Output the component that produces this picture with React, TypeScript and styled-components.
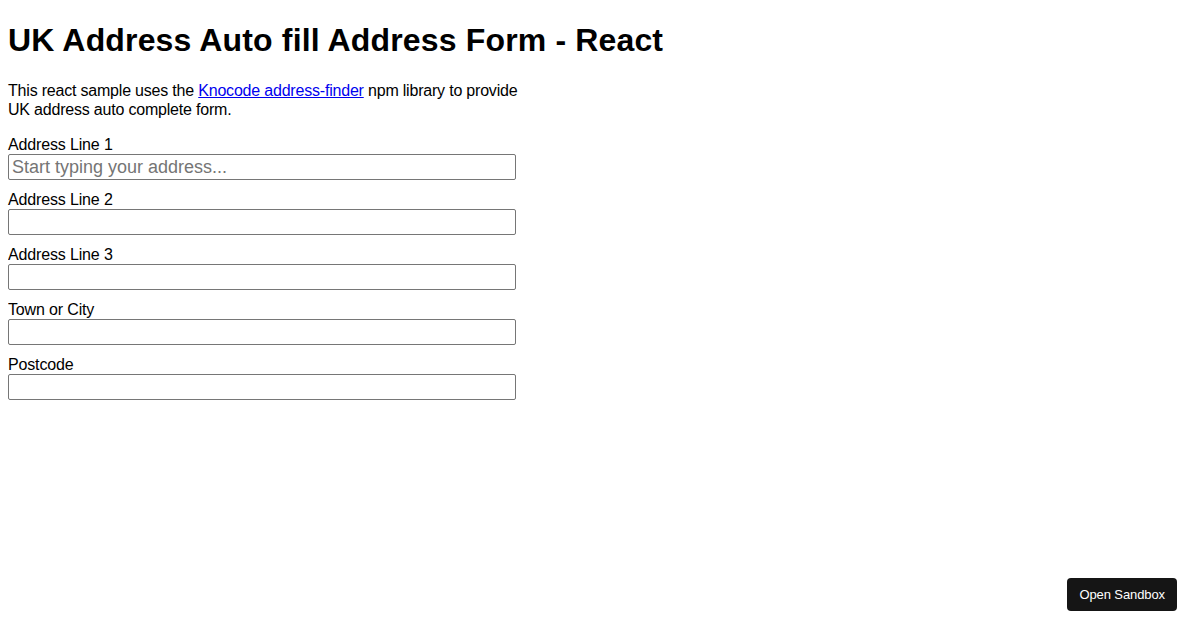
import styled, {createGlobalStyle} from 'styled-components';

const GlobalStyle = createGlobalStyle`
	body {
		margin: 8px;
		font-family: "Liberation Sans", Arial, sans-serif;
		color: #000;
		background: #fff;
	}
`;

const Page = styled.main`
	display: flex;
	flex-direction: column;
`;

const Title = styled.h1`
	font-size: 32px;
	font-weight: bold;
	letter-spacing: 0.15px;
	margin: 14px 0 22px;
`;

const Intro = styled.p`
	font-size: 16px;
	line-height: 19px;
	letter-spacing: -0.2px;
	max-width: 520px;
	margin: 0 0 16px;

	a {
		color: #0000ee;
	}
`;

const Form = styled.form`
	display: flex;
	flex-direction: column;
	gap: 10px;
	width: 508px;
`;

const Field = styled.div`
	display: flex;
	flex-direction: column;
`;

const Label = styled.label`
	font-size: 16px;
	line-height: 19px;
	letter-spacing: -0.15px;
`;

const Input = styled.input`
	box-sizing: border-box;
	width: 100%;
	height: 26px;
	font-family: "Liberation Sans", Arial, sans-serif;
	font-size: 18px;
	padding: 1px 3px;
	border: 1px solid #767676;
	border-radius: 2px;

	&::placeholder {
		color: #757575;
	}
`;

const SandboxButton = styled.button`
	position: fixed;
	right: 23px;
	bottom: 19px;
	height: 33px;
	padding: 0 12px;
	background: #151515;
	color: #fff;
	border: none;
	border-radius: 4px;
	font-family: "Liberation Sans", Arial, sans-serif;
	font-size: 13px;
	letter-spacing: -0.1px;
`;

const fields = [
	{id: 'line1', label: 'Address Line 1', placeholder: 'Start typing your address...'},
	{id: 'line2', label: 'Address Line 2'},
	{id: 'line3', label: 'Address Line 3'},
	{id: 'town', label: 'Town or City'},
	{id: 'postcode', label: 'Postcode'},
];

export default function App() {
	return (
		<>
			<GlobalStyle />
			<Page>
				<Title>UK Address Auto fill Address Form - React</Title>
				<Intro>
					This react sample uses the <a href="#">Knocode address-finder</a> npm library to provide UK address auto complete form.
				</Intro>
				<Form>
					{fields.map((f) => (
						<Field key={f.id}>
							<Label htmlFor={f.id}>{f.label}</Label>
							<Input id={f.id} placeholder={f.placeholder} />
						</Field>
					))}
				</Form>
			</Page>
			<SandboxButton>Open Sandbox</SandboxButton>
		</>
	);
}
